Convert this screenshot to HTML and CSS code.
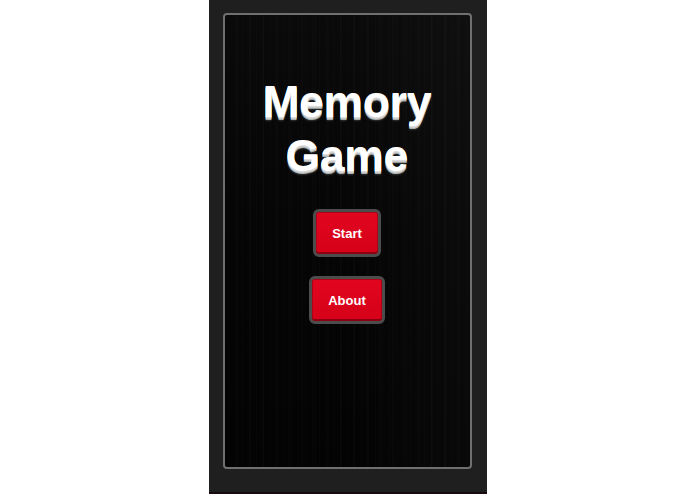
FILE: index.html
```html
<!DOCTYPE html>
<html lang="en">
<head>
<meta charset="utf-8">
<meta name="viewport" content="width=device-width, initial-scale=1">
<title>Memory Game</title>
<link rel="stylesheet" href="styles.css">
</head>
<body>
<main class="screen">
  <section class="panel">
    <h1 class="title">Memory<br>Game</h1>
    <nav class="menu">
      <button class="menu-button" type="button">Start</button>
      <button class="menu-button" type="button">About</button>
    </nav>
  </section>
</main>
</body>
</html>
```

FILE: styles.css
```css
* {
  box-sizing: border-box;
}

body {
  margin: 0;
  background: #fff;
  font-family: "Liberation Sans", Arial, sans-serif;
}

.screen {
  display: flex;
  width: 40%;
  min-height: 100vh;
  margin: 0 auto;
  padding: 13px 15px 23px 14px;
  background: #1f1f1f;
  border-bottom: 2px solid #160c10;
}

.panel {
  flex: 1;
  padding: 60px 20px;
  border: 2px solid #707070;
  border-radius: 4px;
  text-align: center;
  background:
    repeating-linear-gradient(90deg, transparent 0 3px, rgba(255, 255, 255, 0.012) 3px 4px, transparent 4px 7px),
    repeating-linear-gradient(90deg, transparent 0 11px, rgba(255, 255, 255, 0.01) 11px 13px),
    linear-gradient(90deg, transparent 50%, rgba(255, 255, 255, 0.025)),
    linear-gradient(#0a0a0a, #050505 50%, #030303);
}

.title {
  margin: 0;
  color: #fff;
  font-size: 44px;
  line-height: 54px;
  font-weight: bold;
  text-shadow: 0 1px 0 #ddd, 0 2px 0 #ccc, 0 3px 0 #aab0b0, 0 4px 2px #333;
}

.menu {
  display: flex;
  flex-direction: column;
  align-items: center;
  gap: 19px;
  margin-top: 26px;
}

.menu-button {
  height: 48px;
  padding: 0 16px;
  border: 3px solid #4c4c4c;
  border-radius: 6px;
  color: #fff;
  background: linear-gradient(#e2061f, #d50019);
  box-shadow: inset 0 1px 0 #b00018, inset 0 -2px 0 #8c0010, inset 1px 0 0 #b00018, inset -1px 0 0 #b00018;
  font: bold 13px "Liberation Sans", Arial, sans-serif;
  cursor: pointer;
}
```
